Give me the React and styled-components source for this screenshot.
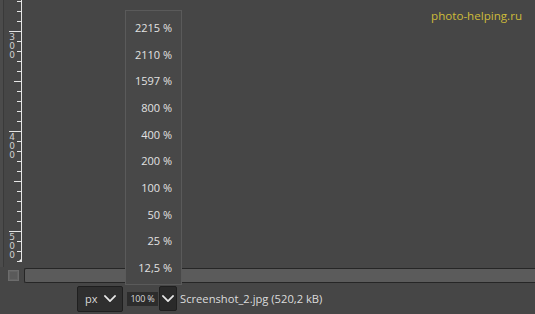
import React from "react"
import styled, { createGlobalStyle } from "styled-components"

const GlobalStyle = createGlobalStyle`
  html, body {
    margin: 0;
    padding: 0;
    background: #464646;
  }
  body {
    font-family: "Open Sans", "Liberation Sans", sans-serif;
  }
`

const zoomLevels = ["2215 %", "2110 %", "1597 %", "800 %", "400 %", "200 %", "100 %", "50 %", "25 %", "12,5 %"]

const Chevron = ({ size = 12 }) => (
  <svg width={size} height={size * 0.6} viewBox="0 0 12 7" fill="none">
    <path d="M1 1 L6 6 L11 1" stroke="#e8e8e8" strokeWidth="1.8" strokeLinecap="square" />
  </svg>
)

const Ruler = () => {
  const ticks = []
  for (let y = 1; y < 262; y += 10) {
    const major = (y - 31) % 100 === 0
    const medium = (y - 31) % 50 === 0
    const x1 = major ? 8 : medium ? 13 : 16
    ticks.push(<line key={y} x1={x1} x2={20} y1={y + 0.5} y2={y + 0.5} stroke="#e6e6e6" strokeWidth="1" />)
  }
  const labels = [
    { top: 31, digits: "300" },
    { top: 131, digits: "400" },
    { top: 231, digits: "500" },
  ]
  return (
    <svg width="18" height="267" viewBox="3 0 18 267">
      <line x1={20.5} x2={20.5} y1={0} y2={262} stroke="#e6e6e6" strokeWidth="1" />
      {ticks}
      {labels.map((l) =>
        l.digits.split("").map((d, i) => (
          <text
            key={l.top + "-" + i}
            x={11}
            y={l.top + 9 + i * 9}
            fontSize="9"
            fill="#cfcfcf"
            textAnchor="middle"
            fontFamily="DejaVu Sans, sans-serif"
          >
            {d}
          </text>
        ))
      )}
      <path d="M17 262 L20 262 L20 259 Z" fill="#e6e6e6" />
    </svg>
  )
}

export default function App() {
  return (
    <>
      <GlobalStyle />
      <Window>
        <Main>
          <LeftStrip />
          <RulerBox>
            <Ruler />
          </RulerBox>
          <Canvas>
            <Watermark>photo-helping.ru</Watermark>
          </Canvas>
        </Main>
        <ScrollRow>
          <LeftStrip />
          <NavButton>
            <NavInner />
          </NavButton>
          <Track />
        </ScrollRow>
        <StatusBar>
          <LeftStrip />
          <UnitCombo>
            <span>px</span>
            <Chevron />
          </UnitCombo>
          <ZoomEntry>100 %</ZoomEntry>
          <ArrowButton>
            <Chevron />
          </ArrowButton>
          <FileInfo>Screenshot_2.jpg (520,2 kB)</FileInfo>
        </StatusBar>
        <ZoomMenu>
          {zoomLevels.map((z) => (
            <MenuItem key={z}>{z}</MenuItem>
          ))}
        </ZoomMenu>
      </Window>
    </>
  )
}

const Window = styled.div`
  position: relative;
  width: 535px;
  height: 314px;
  overflow: hidden;
  background: #464646;
  display: flex;
  flex-direction: column;
`

const Main = styled.div`
  display: flex;
  height: 267px;
`

const LeftStrip = styled.div`
  width: 3px;
  flex: none;
  background: #4b4b4b;
  border-right: 1px solid #3a3a3a;
`

const RulerBox = styled.div`
  width: 18px;
  flex: none;
  display: flex;
`

const Canvas = styled.div`
  flex: 1;
  display: flex;
  justify-content: flex-end;
  align-items: flex-start;
  padding: 8px 13px 0 0;
`

const Watermark = styled.div`
  color: #cdbb3a;
  font-size: 11.6px;
`

const ScrollRow = styled.div`
  display: flex;
  align-items: center;
  height: 16px;
`

const NavButton = styled.div`
  margin-left: 4px;
  width: 11px;
  height: 11px;
  background: #626262;
  border: 1px solid #6c6c6c;
  box-sizing: border-box;
  display: flex;
  align-items: center;
  justify-content: center;
`

const NavInner = styled.div`
  width: 7px;
  height: 7px;
  background: #5a5a5a;
`

const Track = styled.div`
  margin-left: 5px;
  flex: 1;
  height: 15px;
  box-sizing: border-box;
  background: #5b5b5b;
  border: 1px solid #262626;
  border-right: none;
  border-radius: 2px 0 0 2px;
`

const StatusBar = styled.div`
  flex: 1;
  display: flex;
  align-items: center;
`

const UnitCombo = styled.div`
  margin-left: 73px;
  width: 46px;
  height: 26px;
  box-sizing: border-box;
  background: #2f2f2f;
  border: 1px solid #1f1f1f;
  border-radius: 2px;
  display: flex;
  align-items: center;
  justify-content: space-between;
  padding: 0 6px 0 7px;
  color: #d8d8d8;
  font-size: 11px;
`

const ZoomEntry = styled.div`
  margin-left: 4px;
  width: 31px;
  height: 14px;
  background: #2c2c2c;
  color: #d8d8d8;
  font-size: 9px;
  display: flex;
  align-items: center;
  justify-content: center;
  letter-spacing: -0.2px;
`

const ArrowButton = styled.div`
  margin-left: 1px;
  width: 18px;
  height: 25px;
  box-sizing: border-box;
  background: #2a2a2a;
  border: 1px solid #1f1f1f;
  border-radius: 2px;
  display: flex;
  align-items: center;
  justify-content: center;
`

const FileInfo = styled.div`
  margin-left: 3px;
  color: #dcdcdc;
  font-size: 11.2px;
`

const ZoomMenu = styled.div`
  position: absolute;
  left: 125px;
  top: 10px;
  width: 57px;
  height: 275px;
  box-sizing: border-box;
  background: #484848;
  border: 1px solid #5a5a5a;
  padding: 3px 0;
  display: flex;
  flex-direction: column;
`

const MenuItem = styled.div`
  height: 27px;
  display: flex;
  align-items: center;
  justify-content: flex-end;
  padding-right: 9px;
  color: #e2e2e2;
  font-size: 11px;
`
